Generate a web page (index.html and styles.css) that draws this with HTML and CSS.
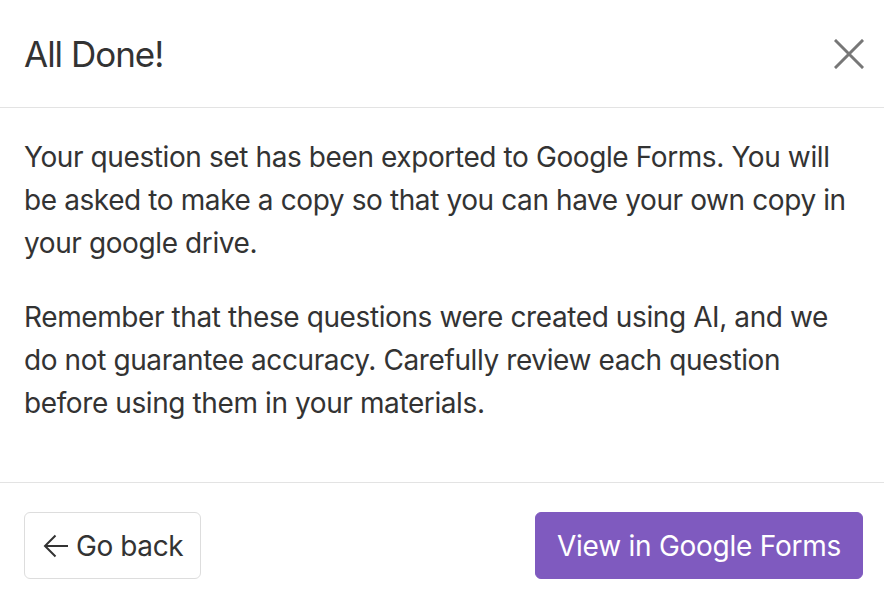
FILE: index.html
```html
<!DOCTYPE html>
<html>
<head>
<meta charset="utf-8">
<link rel="stylesheet" href="styles.css">
</head>
<body>
<div class="modal">
  <div class="modal-header">
    <h1 class="modal-title">All Done!</h1>
    <button class="close-btn" aria-label="Close">
      <svg width="30" height="30" viewBox="0 0 30 30"><path d="M2 2 L28 28 M28 2 L2 28" stroke="#777" stroke-width="3" stroke-linecap="square" fill="none"/></svg>
    </button>
  </div>
  <div class="modal-body">
    <p>Your question set has been exported to Google Forms. You will be asked to make a copy so that you can have your own copy in your google drive.</p>
    <p>Remember that these questions were created using AI, and we do not guarantee accuracy. Carefully review each question before using them in your materials.</p>
  </div>
  <div class="modal-footer">
    <button class="btn btn-light">
      <svg class="arrow" width="26" height="24" viewBox="0 0 26 24"><path d="M25 12 H2 M12.5 1.5 L2 12 L12.5 22.5" stroke="#333" stroke-width="2" fill="none" stroke-linejoin="miter"/></svg>
      <span>Go back</span>
    </button>
    <button class="btn btn-primary">View in Google Forms</button>
  </div>
</div>
</body>
</html>
```
FILE: styles.css
```css
* { box-sizing: border-box; }
html, body { margin: 0; padding: 0; background: #fff; }
body {
  font-family: Inter, "Noto Sans", sans-serif;
  color: #333;
  width: 884px;
  height: 598px;
  overflow: hidden;
}
.modal { display: flex; flex-direction: column; }
.modal-header {
  height: 108px;
  display: flex;
  align-items: center;
  justify-content: space-between;
  padding: 0 20px 0 24px;
  border-bottom: 1px solid #e3e3e3;
}
.modal-title {
  margin: 0;
  font-size: 35px;
  font-weight: 400;
  letter-spacing: -1px;
  color: #333;
}
.close-btn {
  background: none;
  border: 0;
  padding: 0;
  width: 30px;
  height: 30px;
  display: flex;
  cursor: pointer;
}
.modal-body {
  padding: 28px 24px 26px 24px;
  border-bottom: 1px solid #e3e3e3;
}
.modal-body p {
  margin: 0 0 31px 0;
  font-size: 28px;
  line-height: 43px;
  letter-spacing: -0.4px;
}
.modal-footer {
  display: flex;
  justify-content: space-between;
  padding: 29px 21px 20px 24px;
}
.btn {
  height: 67px;
  border-radius: 6px;
  font-family: inherit;
  font-size: 28px;
  letter-spacing: -0.25px;
  display: flex;
  align-items: center;
  cursor: pointer;
}
.btn-light {
  background: #fff;
  border: 1px solid #ddd;
  color: #333;
  padding: 0 17px 0 18px;
  gap: 7px;
  letter-spacing: -0.4px;
}
.btn-primary {
  background: #7f5abf;
  border: 1px solid #7f5abf;
  color: #fff;
  padding: 0 21px;
}
```
